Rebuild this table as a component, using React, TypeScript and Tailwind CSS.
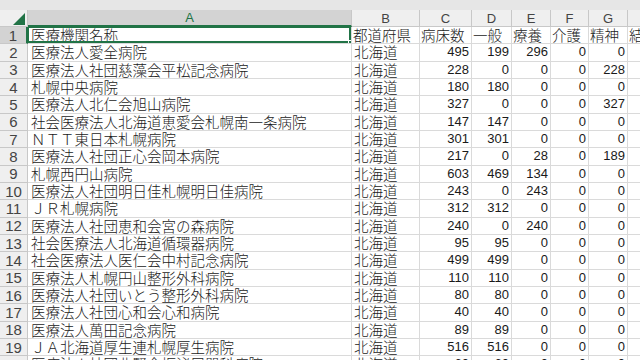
import React from "react";

const rows: [string, string, number, number, number, number, number][] = [
  ["医療法人愛全病院", "北海道", 495, 199, 296, 0, 0],
  ["医療法人社団慈藻会平松記念病院", "北海道", 228, 0, 0, 0, 228],
  ["札幌中央病院", "北海道", 180, 180, 0, 0, 0],
  ["医療法人北仁会旭山病院", "北海道", 327, 0, 0, 0, 327],
  ["社会医療法人北海道恵愛会札幌南一条病院", "北海道", 147, 147, 0, 0, 0],
  ["ＮＴＴ東日本札幌病院", "北海道", 301, 301, 0, 0, 0],
  ["医療法人社団正心会岡本病院", "北海道", 217, 0, 28, 0, 189],
  ["札幌西円山病院", "北海道", 603, 469, 134, 0, 0],
  ["医療法人社団明日佳札幌明日佳病院", "北海道", 243, 0, 243, 0, 0],
  ["ＪＲ札幌病院", "北海道", 312, 312, 0, 0, 0],
  ["医療法人社団恵和会宮の森病院", "北海道", 240, 0, 240, 0, 0],
  ["社会医療法人北海道循環器病院", "北海道", 95, 95, 0, 0, 0],
  ["社会医療法人医仁会中村記念病院", "北海道", 499, 499, 0, 0, 0],
  ["医療法人札幌円山整形外科病院", "北海道", 110, 110, 0, 0, 0],
  ["医療法人社団いとう整形外科病院", "北海道", 80, 80, 0, 0, 0],
  ["医療法人社団心和会心和病院", "北海道", 40, 40, 0, 0, 0],
  ["医療法人萬田記念病院", "北海道", 89, 89, 0, 0, 0],
  ["ＪＡ北海道厚生連札幌厚生病院", "北海道", 516, 516, 0, 0, 0],
  ["医療法人社団北腎会坂泌尿器科病院", "北海道", 60, 60, 0, 0, 0],
];

const jp = "font-['Noto_Sans_CJK_JP',sans-serif] font-light";
const num = "font-['Liberation_Sans',Arial,sans-serif]";
const grid =
  "grid grid-cols-[28px_324px_68px_52px_40px_39px_38px_39px_60px]";
const cell = "border-r border-b border-[#dadada] overflow-hidden whitespace-nowrap";

export default function App() {
  const letters = ["B", "C", "D", "E", "F", "G", "H"];
  const heads = ["都道府県", "病床数", "一般", "療養", "介護", "精神", "結核"];
  return (
    <div className="w-[640px] h-[360px] overflow-hidden bg-white text-[#1a1a1a]">
      <div className="h-[10px] bg-[#e6e6e6]" />
      <div className={`${grid} h-[17px] bg-[#efefef] ${num} text-[13px] text-[#444]`}>
        <div className="relative border-r border-b border-[#c8c8c8]">
          <svg className="absolute right-[2px] bottom-[1px]" width="12" height="12" viewBox="0 0 12 12">
            <polygon points="12,0 12,12 0,12" fill="#217346" />
          </svg>
        </div>
        <div className="bg-[#d3d3d3] border-r border-[#c8c8c8] border-b-2 border-b-[#217346] text-[#217346] flex items-center justify-center leading-none">
          A
        </div>
        {letters.map((l) => (
          <div key={l} className="border-r border-b border-[#c8c8c8] flex items-center justify-center leading-none">
            {l}
          </div>
        ))}
      </div>
      <div className={`${grid} auto-rows-[17.33px]`}>
        <div className={`bg-[#d3d3d3] border-b border-[#c8c8c8] border-r-2 border-r-[#217346] ${num} text-[15px] text-[#444] flex items-center justify-center leading-none`}>
          1
        </div>
        <div className={`${cell} relative ${jp} text-[14.5px] leading-[16px] pl-[3px]`}>
          医療機関名称
          <div className="absolute -left-[1px] -top-[1px] right-0 bottom-0 border-2 border-[#217346]" />
          <div className="absolute right-[-2px] bottom-[-2px] w-[5px] h-[5px] bg-[#217346] border border-white" />
        </div>
        {heads.map((h) => (
          <div key={h} className={`${cell} ${jp} text-[14.5px] leading-[16px] pl-[1px]`}>
            {h}
          </div>
        ))}
        {rows.map((r, i) => (
          <React.Fragment key={i}>
            <div className={`bg-[#efefef] border-r border-b border-[#c8c8c8] ${num} text-[15px] text-[#444] flex items-center justify-center leading-none`}>
              {i + 2}
            </div>
            <div className={`${cell} ${jp} text-[14.5px] leading-[16px] pl-[3px]`}>{r[0]}</div>
            <div className={`${cell} ${jp} text-[14.5px] leading-[16px] pl-[2px]`}>{r[1]}</div>
            {r.slice(2).map((v, j) => (
              <div key={j} className={`${cell} ${num} text-[13px] leading-[16px] text-right pr-[2px] flex items-center justify-end`}>
                {v}
              </div>
            ))}
            <div className={cell} />
          </React.Fragment>
        ))}
      </div>
    </div>
  );
}
